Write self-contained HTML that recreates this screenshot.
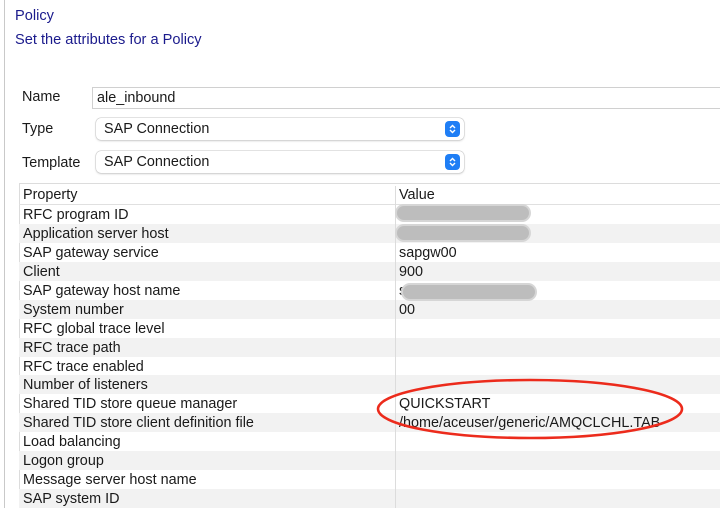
<!DOCTYPE html>
<html><head><style>
*{margin:0;padding:0;box-sizing:border-box}
html,body{width:720px;height:508px;overflow:hidden}
body{background:#fff;font-family:"Liberation Sans",sans-serif;font-size:14.4px;color:#1a1a1a;position:relative}
.a{position:absolute;white-space:nowrap}
.blue{color:#1a1a8c;font-size:14.6px}
.sel{position:absolute;left:96px;width:368px;height:22px;border-radius:5px;background:#fff;box-shadow:0 0 0 .5px #c8c8c8,0 1px 2px rgba(0,0,0,.18);padding-left:8px;line-height:22px;font-size:14.4px}
.btn{position:absolute;right:4px;top:3px;width:15px;height:16px;border-radius:4px;background:#1f7ef5}
.row{position:absolute;left:19px;width:701px;height:19px;line-height:21px}
.row span{position:absolute;left:4px}
.row b{position:absolute;left:380px;font-weight:normal}
.g{background:#f2f2f2}
.pill{position:absolute;height:14px;border-radius:7px;background:#bdbdbd;box-shadow:0 0 0 2px #d6d6d6}
</style></head><body>
<div class="a" style="left:4px;top:0;width:1px;height:508px;background:#c9c9c9"></div>
<div class="a blue" style="left:15px;top:8px">Policy</div>
<div class="a blue" style="left:15px;top:32px">Set the attributes for a Policy</div>
<div class="a" style="left:22px;top:89px">Name</div>
<div class="a" style="left:92px;top:87px;width:640px;height:22px;border:1px solid #d0d0d0;padding-left:4px;line-height:20px">ale_inbound</div>
<div class="a" style="left:22px;top:121px">Type</div>
<div class="sel" style="top:118px">SAP Connection<div class="btn"><svg width="15" height="16" viewBox="0 0 15 16"><path d="M5 7 7.5 4.5 10 7M5 9 7.5 11.5 10 9" stroke="#fff" stroke-width="1.4" fill="none"/></svg></div></div>
<div class="a" style="left:22px;top:155px">Template</div>
<div class="sel" style="top:151px">SAP Connection<div class="btn"><svg width="15" height="16" viewBox="0 0 15 16"><path d="M5 7 7.5 4.5 10 7M5 9 7.5 11.5 10 9" stroke="#fff" stroke-width="1.4" fill="none"/></svg></div></div>
<div class="a" style="left:19px;top:183px;width:701px;height:325px;border-top:1px solid #dcdcdc;border-left:1px solid #dcdcdc"></div>
<div class="row" style="top:184px;height:21px;line-height:22px;border-bottom:1px solid #e0e0e0"><span>Property</span><b>Value</b></div>
<div class="row" style="top:205px"><span>RFC program ID</span></div>
<div class="row g" style="top:224px"><span>Application server host</span></div>
<div class="row" style="top:243px"><span>SAP gateway service</span><b>sapgw00</b></div>
<div class="row g" style="top:262px"><span>Client</span><b>900</b></div>
<div class="row" style="top:281px"><span>SAP gateway host name</span><b>s</b></div>
<div class="row g" style="top:300px"><span>System number</span><b>00</b></div>
<div class="row" style="top:319px"><span>RFC global trace level</span></div>
<div class="row g" style="top:338px"><span>RFC trace path</span></div>
<div class="row" style="top:357px"><span>RFC trace enabled</span></div>
<div class="row g" style="top:375px"><span>Number of listeners</span></div>
<div class="row" style="top:394px"><span>Shared TID store queue manager</span><b>QUICKSTART</b></div>
<div class="row g" style="top:413px"><span>Shared TID store client definition file</span><b>/home/aceuser/generic/AMQCLCHL.TAB</b></div>
<div class="row" style="top:432px"><span>Load balancing</span></div>
<div class="row g" style="top:451px"><span>Logon group</span></div>
<div class="row" style="top:470px"><span>Message server host name</span></div>
<div class="row g" style="top:489px"><span>SAP system ID</span></div>
<div class="a" style="left:395px;top:186px;width:1px;height:322px;background:#dcdcdc"></div>
<div class="pill" style="left:397px;top:206px;width:132px"></div>
<div class="pill" style="left:397px;top:226px;width:132px"></div>
<div class="pill" style="left:403px;top:285px;width:132px"></div>
<svg class="a" style="left:0;top:0" width="720" height="508"><ellipse cx="530" cy="409" rx="152" ry="29" fill="none" stroke="#ec2b1c" stroke-width="2.6"/></svg>
</body></html>
